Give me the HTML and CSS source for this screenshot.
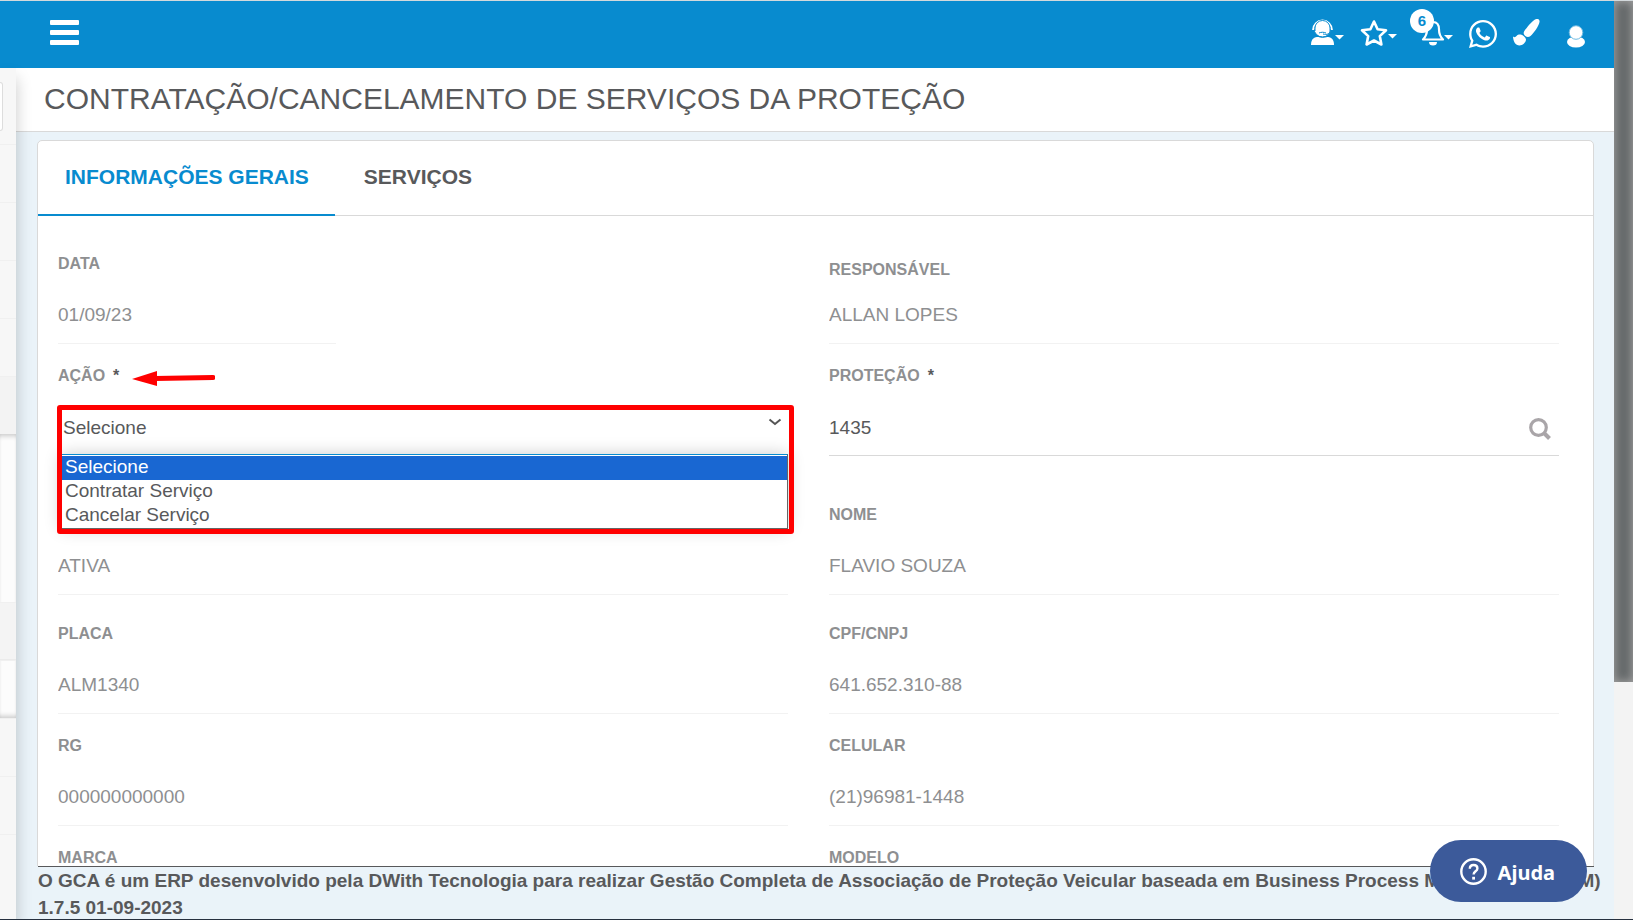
FILE: index.html
```html
<!DOCTYPE html>
<html lang="pt-BR">
<head>
    <meta charset="UTF-8">
    <title>Contratação/Cancelamento de Serviços da Proteção</title>
    <link rel="stylesheet" href="styles.css">
</head>
<body>
<div class="page">
    <header class="topbar">
        <button class="menu-btn" aria-label="Menu">
            <span></span><span></span><span></span>
        </button>
        <nav class="tools">
            <button class="tool" aria-label="Atendimento">
                <svg width="33" height="30" viewBox="0 0 33 30">
                    <path d="M0 26c0-5 2-7.500 6-8h11c4 .5 6 3 6 8z" fill="#fff"/>
                    <circle cx="11.500" cy="9.500" r="8.500" fill="#fff" stroke="#088bcf" stroke-width="1"/>
                    <path d="M2 11a9.500 9.500 0 0 1 19 0" fill="none" stroke="#fff" stroke-width="1.800"/>
                    <path d="M4 12V9a7.500 7.500 0 0 1 15 0v3M19 12c0 3-3 4-7 3M8 14c2-1 5-1 7 0M5 16c3 3 10 3 14 0" fill="none" stroke="#088bcf" stroke-width="1"/>
                    <path d="M24 16h9l-4.500 4.500z" fill="#fff"/>
                </svg>
            </button>
            <button class="tool" aria-label="Favoritos">
                <svg width="37" height="30" viewBox="0 0 37 30">
                    <path d="M14 2.500l3.600 7.700 8.400 1.100-6.200 5.800 1.600 8.400-7.400-4-7.400 4 1.600-8.400L2 11.300l8.400-1.100z" fill="none" stroke="#fff" stroke-width="2.600" stroke-linejoin="round"/>
                    <path d="M28 15h9l-4.500 4.500z" fill="#fff"/>
                </svg>
            </button>
            <button class="tool tool-bell" aria-label="Notificações">
                <svg width="32" height="30" viewBox="0 0 32 30">
                    <path d="M2 20.500c3-3 4-5 4-10 0-5 2.500-7.500 6-7.500s6 2.500 6 7.500c0 5 1 7 4 10z" fill="none" stroke="#fff" stroke-width="2.200" stroke-linejoin="round"/>
                    <path d="M8 23h8a4 3.500 0 0 1-8 0z" fill="#fff"/>
                    <path d="M23 16h9l-4.500 4.500z" fill="#fff"/>
                </svg>
                <span class="badge">6</span>
            </button>
            <a class="tool" href="#" aria-label="WhatsApp">
                <svg width="28" height="28" viewBox="0 32 448 448">
                    <path fill="#fff" d="M380.900 97.100C339 55.100 283.200 32 223.900 32c-122.400 0-222 99.600-222 222 0 39.100 10.200 77.300 29.600 111L0 480l117.700-30.900c32.400 17.700 68.900 27 106.100 27h.1c122.300 0 224.100-99.600 224.100-222 0-59.300-25.200-115-67.100-157zm-157 341.600c-33.200 0-65.700-8.900-94-25.700l-6.700-4-69.800 18.300L72 359.200l-4.400-7c-18.500-29.400-28.200-63.300-28.200-98.200 0-101.700 82.800-184.500 184.600-184.500 49.300 0 95.600 19.200 130.400 54.100 34.800 34.900 56.200 81.200 56.100 130.500 0 101.800-84.900 184.600-186.600 184.600zm101.200-138.200c-5.500-2.800-32.800-16.200-37.900-18-5.100-1.900-8.800-2.800-12.500 2.800-3.700 5.600-14.300 18-17.600 21.800-3.200 3.700-6.500 4.200-12 1.400-32.600-16.300-54-29.100-75.500-66-5.700-9.800 5.700-9.100 16.300-30.300 1.800-3.700.9-6.900-.5-9.700-1.400-2.800-12.500-30.100-17.100-41.200-4.500-10.800-9.100-9.300-12.500-9.500-3.200-.2-6.900-.2-10.600-.2-3.700 0-9.700 1.400-14.800 6.900-5.100 5.600-19.400 19-19.400 46.300 0 27.300 19.900 53.700 22.600 57.400 2.800 3.700 39.100 59.700 94.800 83.800 35.200 15.200 49 16.500 66.600 13.900 10.700-1.600 32.800-13.400 37.400-26.400 4.600-13 4.600-24.100 3.200-26.400-1.300-2.500-5-3.900-10.500-6.600z"/>
                </svg>
            </a>
            <button class="tool" aria-label="Tema">
                <svg width="27" height="30" viewBox="0 0 27 30">
                    <path d="M22 .5c2.500-1.300 5-.3 4.500 2.500-.8 4-5.500 11-9 14-1.500 1.300-3.500 1.500-5.200 0-1.800-1.500-2.200-3.300-.8-5.200C13.500 9 18.500 2.500 22 .5z" fill="#fff"/>
                    <path d="M0 17.500c1.500 1 2.500.8 3.500-.5 1.200-1.500 3.200-1.800 5-1.300 2 .6 4.200 2.900 4.500 4.900C12.800 24 9.500 26.500 6.500 26.500 2.500 26.500.2 22.500 0 17.500z" fill="#fff"/>
                </svg>
            </button>
            <button class="tool tool-user" aria-label="Usuário">
                <svg width="18" height="30" viewBox="0 0 18 30">
                    <ellipse cx="9" cy="23" rx="9" ry="5.500" fill="#fff"/>
                    <circle cx="9" cy="13.500" r="6.800" fill="#fff" stroke="#6dbbe3" stroke-width="1"/>
                </svg>
            </button>
        </nav>
    </header>

    <div class="layout">
        <aside class="sidebar">
            <div class="side-search"></div>
            <div class="side-item"></div>
            <div class="side-item"></div>
            <div class="side-item"></div>
            <div class="side-item"></div>
            <div class="side-item side-open"></div>
            <div class="side-sub">
                <div class="side-group"></div>
                <div class="side-item side-current"></div>
                <div class="side-item"></div>
            </div>
            <div class="side-item"></div>
            <div class="side-item"></div>
            <div class="side-item"></div>
        </aside>

        <main class="main">
            <h1 class="title">CONTRATAÇÃO/CANCELAMENTO DE SERVIÇOS DA PROTEÇÃO</h1>
            <div class="content">
                <div class="card">
                    <div class="tabs" role="tablist">
                        <button class="tab active" role="tab" aria-selected="true">INFORMAÇÕES GERAIS</button>
                        <button class="tab" role="tab" aria-selected="false">SERVIÇOS</button>
                    </div>
                    <form class="form">
                        <div class="row">
                            <div class="field field-short">
                                <label for="data">DATA</label>
                                <input type="text" id="data" value="01/09/23" readonly>
                            </div>
                            <div class="field field-tight">
                                <label for="responsavel">RESPONSÁVEL</label>
                                <input type="text" id="responsavel" value="ALLAN LOPES" readonly>
                            </div>
                        </div>
                        <div class="row">
                            <div class="field field-select">
                                <label for="acao">AÇÃO <span class="required">*</span>
                                    <svg class="arrow" width="83" height="15" viewBox="0 0 83 15">
                                        <path d="M0 8L25 0v15z" fill="#f00"/>
                                        <path d="M23 7.500L81 6.500" stroke="#f00" stroke-width="5" stroke-linecap="round"/>
                                    </svg>
                                </label>
                                <select id="acao">
                                    <option selected>Selecione</option>
                                    <option>Contratar Serviço</option>
                                    <option>Cancelar Serviço</option>
                                </select>
                                <svg class="chevron" width="14" height="8" viewBox="0 0 14 8">
                                    <path d="M1.500 1.500L7 6l5.500-4.500" fill="none" stroke="#555" stroke-width="2"/>
                                </svg>
                                <ul class="options">
                                    <li class="selected">Selecione</li>
                                    <li>Contratar Serviço</li>
                                    <li>Cancelar Serviço</li>
                                </ul>
                                <div class="highlight"></div>
                            </div>
                            <div class="field">
                                <label for="protecao">PROTEÇÃO <span class="required">*</span></label>
                                <input type="text" id="protecao" value="1435">
                                <button type="button" class="search-btn" aria-label="Pesquisar">
                                    <svg width="22" height="22" viewBox="0 0 22 22">
                                        <circle cx="9.500" cy="9.500" r="7.800" fill="none" stroke="#a9a5a8" stroke-width="3.200"/>
                                        <path d="M15 15l5.500 5.500" stroke="#a9a5a8" stroke-width="4"/>
                                    </svg>
                                </button>
                            </div>
                        </div>
                        <div class="row row-wide">
                            <div class="field">
                                <input type="text" id="situacao" value="ATIVA" aria-label="Situação" readonly>
                            </div>
                            <div class="field">
                                <label for="nome">NOME</label>
                                <input type="text" id="nome" value="FLAVIO SOUZA" readonly>
                            </div>
                        </div>
                        <div class="row row-mid">
                            <div class="field">
                                <label for="placa">PLACA</label>
                                <input type="text" id="placa" value="ALM1340" readonly>
                            </div>
                            <div class="field">
                                <label for="cpf">CPF/CNPJ</label>
                                <input type="text" id="cpf" value="641.652.310-88" readonly>
                            </div>
                        </div>
                        <div class="row">
                            <div class="field">
                                <label for="rg">RG</label>
                                <input type="text" id="rg" value="000000000000" readonly>
                            </div>
                            <div class="field">
                                <label for="celular">CELULAR</label>
                                <input type="text" id="celular" value="(21)96981-1448" readonly>
                            </div>
                        </div>
                        <div class="row">
                            <div class="field">
                                <label for="marca">MARCA</label>
                                <input type="text" id="marca" readonly>
                            </div>
                            <div class="field">
                                <label for="modelo">MODELO</label>
                                <input type="text" id="modelo" readonly>
                            </div>
                        </div>
                    </form>
                </div>
            </div>
            <footer class="footer">
                O GCA é um ERP desenvolvido pela DWith Tecnologia para realizar Gestão Completa de Associação de Proteção Veicular baseada em Business Process Management (BPM)<br>
                1.7.5 01-09-2023
            </footer>
        </main>
    </div>
</div>
<div class="scrollbar"><div class="thumb"></div></div>

<button class="help">
    <svg width="27" height="27" viewBox="0 0 27 27" fill="none" stroke="#fff">
        <circle cx="13.500" cy="13.500" r="12.200" stroke-width="2.400"/>
        <path d="M9.800 10.800c0-2.300 1.600-3.800 3.800-3.800s3.800 1.400 3.800 3.400c0 2.800-3.800 3-3.800 6" stroke-width="2.400"/>
        <path d="M13.600 18.800v2.800" stroke-width="2.800"/>
    </svg>
    <span>Ajuda</span>
</button>
</body>
</html>
```
FILE: styles.css
```css
* {
    box-sizing: border-box;
}
body {
    margin: 0;
    height: 100vh;
    display: flex;
    overflow: hidden;
    border-top: 1px solid #d3d9dc;
    border-bottom: 1px solid #26303f;
    background: #eaf3f9;
    color: #58595b;
    font-family: "Liberation Sans", Arial, sans-serif;
    font-size: 19px;
}
button {
    padding: 0;
    border: 0;
    background: none;
    font-family: inherit;
    cursor: pointer;
}
svg {
    display: block;
}
.page {
    flex: 1;
    min-width: 0;
    display: flex;
    flex-direction: column;
}

/* topo */
.topbar {
    flex: none;
    height: 67px;
    padding: 0 29px 2px 50px;
    display: flex;
    align-items: center;
    justify-content: space-between;
    background: #088bcf;
}
.menu-btn {
    width: 29px;
    display: grid;
    gap: 5px;
    margin-bottom: 2px;
}
.menu-btn span {
    height: 5px;
    border-radius: 1px;
    background: #fff;
}
.tools {
    display: flex;
    align-items: center;
    gap: 16px;
}
.tool {
    position: relative;
}
.tool-bell {
    margin-left: 8px;
}
.tool-user {
    margin-left: 11px;
}
.badge {
    position: absolute;
    top: -10px;
    left: -11px;
    width: 24px;
    height: 24px;
    border-radius: 50%;
    background: #fff;
    color: #088bcf;
    font-size: 15px;
    font-weight: bold;
    line-height: 24px;
    text-align: center;
}

.layout {
    flex: 1;
    min-height: 0;
    display: flex;
}

/* menu lateral recolhido */
.sidebar {
    flex: none;
    width: 16px;
    position: relative;
    z-index: 1;
    background: #f7f7f7;
    box-shadow: 0 10px 16px rgba(0, 0, 0, 0.22);
}
.side-search {
    width: 3px;
    height: 49px;
    margin: 14px 0 13px;
    border: 1px solid #ddd;
    border-left: 0;
    border-radius: 0 4px 4px 0;
    background: #fff;
}
.side-item {
    height: 58px;
    border-top: 1px solid #f0f0f0;
}
.side-open {
    background: #f3f3f3;
}
.side-sub {
    background: #fcfcfc;
    box-shadow: inset 0 5px 5px -3px rgba(0, 0, 0, 0.2), inset 0 -5px 5px -3px rgba(0, 0, 0, 0.2);
}
.side-group {
    height: 168px;
}
.side-current {
    background: #f4f4f4;
    border-bottom: 1px solid #ebebeb;
}

/* conteudo */
.main {
    flex: 1;
    min-width: 0;
    display: flex;
    flex-direction: column;
}
.title {
    flex: none;
    margin: 0;
    padding: 13px 28px 14px;
    border-bottom: 1px solid #d9d9d9;
    background: #fff;
    font-size: 30px;
    font-weight: normal;
    line-height: 36px;
}
.content {
    flex: 1;
    min-height: 0;
    overflow: hidden;
    padding: 8px 20px 0 21px;
}
.card {
    border: 1px solid #d9d9d9;
    border-radius: 5px;
    background: #fff;
}
.tabs {
    display: flex;
    gap: 2px;
    height: 75px;
    border-bottom: 1px solid #d9d9d9;
}
.tab {
    height: 75px;
    padding: 0 26px 2px 27px;
    border-bottom: 2px solid transparent;
    color: #58595b;
    font-size: 21px;
    font-weight: bold;
}
.tab.active {
    border-color: #088bcf;
    color: #088bcf;
}
.form {
    padding: 16px 34px 0 20px;
}
.row {
    display: grid;
    grid-template-columns: 1fr 1fr;
    column-gap: 41px;
}
.row-wide {
    margin-top: 27px;
}
.row-mid {
    margin-top: 7px;
}
.field {
    position: relative;
    height: 112px;
    display: flex;
    flex-direction: column;
    justify-content: flex-end;
}
.field label {
    display: flex;
    align-items: center;
    margin-bottom: 25px;
    color: #8e8f91;
    font-size: 16px;
    font-weight: bold;
    line-height: 20px;
}
.field-tight label {
    margin-bottom: 19px;
}
.field-short input {
    width: 278px;
}
.required {
    margin-left: 8px;
    color: #58595b;
}
.arrow {
    margin: 4px 0 0 13px;
}
input, select {
    width: 100%;
    height: 45px;
    padding: 0 0 10px;
    border: 0;
    border-bottom: 1px solid #d9d9d9;
    border-radius: 0;
    outline: 0;
    background: transparent;
    color: #58595b;
    font-family: inherit;
    font-size: 19px;
}
input:read-only {
    padding-bottom: 13px;
    border-color: #f2f2f2;
    color: #8e8f91;
}
select {
    appearance: none;
    padding: 0 0 12px 5px;
}
.chevron {
    position: absolute;
    right: 6px;
    bottom: 30px;
}

/* lista aberta */
.options {
    position: absolute;
    z-index: 1;
    top: 110px;
    left: 3px;
    right: 0;
    margin: 0;
    padding: 1px 0 0;
    border: 1px solid #666;
    border-top-color: #088bcf;
    background: #fff;
    box-shadow: 0 0 16px rgba(0, 0, 0, 0.2);
    list-style: none;
}
.options li {
    padding: 0 0 2px 3px;
    line-height: 22px;
}
.options .selected {
    background: #1967d2;
    color: #fff;
}
.highlight {
    position: absolute;
    z-index: 2;
    top: 61px;
    left: -1px;
    right: -6px;
    height: 129px;
    border: 5px solid #f00;
    border-radius: 3px;
    pointer-events: none;
}
.search-btn {
    position: absolute;
    right: 8px;
    bottom: 16px;
}
.footer {
    flex: none;
    height: 53px;
    margin: 0 20px 0 22px;
    border-top: 1px solid #58595b;
    font-weight: bold;
    line-height: 27px;
    white-space: nowrap;
}

/* barra de rolagem */
.scrollbar {
    flex: none;
    width: 19px;
    background: #f3f3f3;
}
.thumb {
    height: 74.2%;
    background: #666a6b;
    box-shadow: inset 0 0 8px 1px #a0a0a0;
}

.help {
    position: fixed;
    right: 46px;
    bottom: 18px;
    z-index: 3;
    display: flex;
    align-items: center;
    gap: 11px;
    height: 62px;
    padding: 0 32px 0 30px;
    border-radius: 31px;
    background: #3c5a9a;
    color: #fff;
    font-family: "Noto Sans", sans-serif;
    font-size: 20px;
    font-weight: bold;
}
.help span {
    padding-top: 2px;
}
```
